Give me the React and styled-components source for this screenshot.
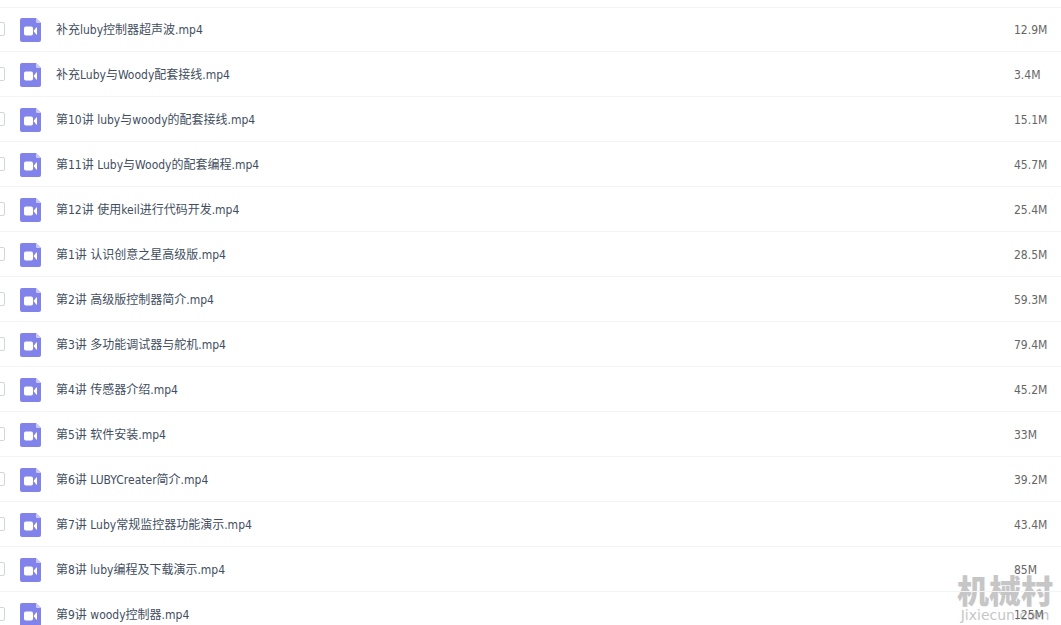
import styled, { createGlobalStyle } from 'styled-components'

const GlobalStyle = createGlobalStyle`
	* {
		box-sizing: border-box;
	}
	body {
		margin: 0;
		overflow: hidden;
		background: #fff;
		color: #424e5e;
		font-family: 'DejaVu Sans Condensed', 'Noto Sans CJK SC', sans-serif;
		font-size: 12px;
	}
`

const files = [
	{ name: '补充luby控制器超声波.mp4', size: '12.9M' },
	{ name: '补充Luby与Woody配套接线.mp4', size: '3.4M' },
	{ name: '第10讲 luby与woody的配套接线.mp4', size: '15.1M' },
	{ name: '第11讲 Luby与Woody的配套编程.mp4', size: '45.7M' },
	{ name: '第12讲 使用keil进行代码开发.mp4', size: '25.4M' },
	{ name: '第1讲 认识创意之星高级版.mp4', size: '28.5M' },
	{ name: '第2讲 高级版控制器简介.mp4', size: '59.3M' },
	{ name: '第3讲 多功能调试器与舵机.mp4', size: '79.4M' },
	{ name: '第4讲 传感器介绍.mp4', size: '45.2M' },
	{ name: '第5讲 软件安装.mp4', size: '33M' },
	{ name: '第6讲 LUBYCreater简介.mp4', size: '39.2M' },
	{ name: '第7讲 Luby常规监控器功能演示.mp4', size: '43.4M' },
	{ name: '第8讲 luby编程及下载演示.mp4', size: '85M' },
	{ name: '第9讲 woody控制器.mp4', size: '125M' }
]

const Page = styled.main`
	position: relative;
	height: 100vh;
	overflow: hidden;
	padding-top: 7px;
`

const FileTable = styled.table`
	position: relative;
	z-index: 1;
	width: 100%;
	table-layout: fixed;
	border-spacing: 0;
	border-top: 1px solid #f2f4f6;
`

const Cell = styled.td`
	width: ${(props) => props.$width || 'auto'};
	height: 45px;
	padding: 1px 0 0;
	border-bottom: 1px solid #f2f4f6;
	color: ${(props) => (props.$muted ? '#666' : 'inherit')};
	white-space: nowrap;

	tr:first-child > & {
		height: 44px;
	}
`

const Checkbox = styled.input`
	appearance: none;
	display: block;
	width: 13px;
	height: 14px;
	margin: 0 0 2px -8px;
	border: 1px solid #d0d6dc;
	border-radius: 2px;
	background: #fff;
`

const FileLink = styled.a`
	display: flex;
	align-items: center;
	gap: 14px;
	color: inherit;
	line-height: 18px;
	text-decoration: none;
`

const Icon = styled.svg`
	width: 22px;
	height: 24px;
`

const Watermark = styled.div`
	position: absolute;
	right: 8px;
	bottom: 2px;
	color: #c6c6c6;
	text-align: center;
`

const WatermarkTitle = styled.div`
	font-size: 32px;
	font-weight: 900;
	line-height: 32px;
`

const WatermarkUrl = styled.div`
	font-family: 'DejaVu Sans', sans-serif;
	font-size: 14px;
	line-height: 15px;
`

const VideoIcon = () => (
	<Icon viewBox="0 0 22 24" aria-hidden="true">
		<path d="M2 0h14l5 5v17a2 2 0 0 1-2 2H2a2 2 0 0 1-2-2V2a2 2 0 0 1 2-2z" fill="#8183ea" />
		<path d="M16 0l5 5h-4a1 1 0 0 1-1-1z" fill="#c9caf8" />
		<rect x="4" y="8.5" width="9" height="9" rx="1.8" fill="#fff" />
		<path d="M13.5 13l3-3.7q.5-.4.5.3v6.8q0 .7-.5.3z" fill="#fff" />
	</Icon>
)

const FileRow = ({ file }) => (
	<tr>
		<Cell $width="20px">
			<Checkbox type="checkbox" aria-label={file.name} />
		</Cell>
		<Cell>
			<FileLink href="#">
				<VideoIcon />
				{file.name}
			</FileLink>
		</Cell>
		<Cell $width="47px" $muted>
			{file.size}
		</Cell>
	</tr>
)

const App = () => (
	<>
		<GlobalStyle />
		<Page>
			<Watermark>
				<WatermarkTitle>机械村</WatermarkTitle>
				<WatermarkUrl>Jixiecun.com</WatermarkUrl>
			</Watermark>
			<FileTable>
				<tbody>
					{files.map((file) => (
						<FileRow key={file.name} file={file} />
					))}
				</tbody>
			</FileTable>
		</Page>
	</>
)

export default App
